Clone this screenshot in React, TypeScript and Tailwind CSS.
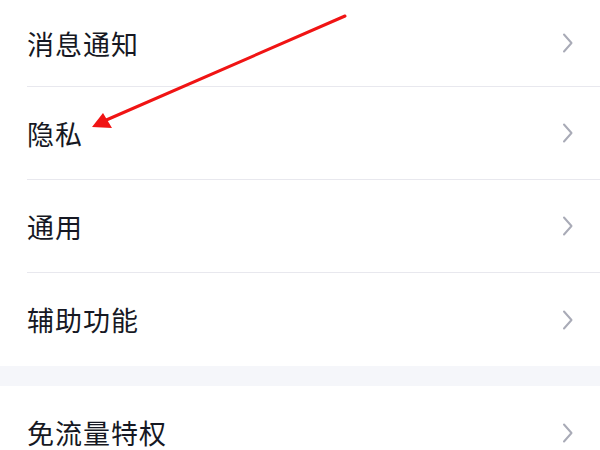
import React from "react";

const Chevron = () => (
  <svg width="12" height="20" viewBox="0 0 12 20" fill="none" className="shrink-0">
    <path d="M3 1.5 L10.5 10 L3 18.5" stroke="#a9abb7" strokeWidth="2" strokeLinecap="round" strokeLinejoin="round" />
  </svg>
);

const Row = ({ label, h, divider }: { label: string; h: string; divider: boolean }) => (
  <div className="pl-[27px] bg-white">
    <div className={`flex items-center justify-between pr-[27px] ${h} ${divider ? "border-b border-[#e8e8ee]" : ""}`}>
      <span className="text-[27px] leading-none text-[#161823] tracking-[1px]" style={{ fontFamily: '"Noto Sans CJK SC", "Noto Sans", sans-serif' }}>
        {label}
      </span>
      <Chevron />
    </div>
  </div>
);

export default function App() {
  return (
    <div className="relative w-[600px] h-[450px] overflow-hidden bg-white">
      <Row label="消息通知" h="h-[87px]" divider />
      <Row label="隐私" h="h-[93px]" divider />
      <Row label="通用" h="h-[93px]" divider />
      <Row label="辅助功能" h="h-[93px]" divider={false} />
      <div className="h-[20px] bg-[#f5f6fa]" />
      <Row label="免流量特权" h="h-[93px]" divider={false} />
      <svg className="absolute left-0 top-0 pointer-events-none" width="600" height="450" viewBox="0 0 600 450">
        <line x1="345" y1="16" x2="104" y2="121" stroke="#f01414" strokeWidth="3" strokeLinecap="round" />
        <polygon points="92,127 103,113 112,128" fill="#f01414" />
      </svg>
    </div>
  );
}
